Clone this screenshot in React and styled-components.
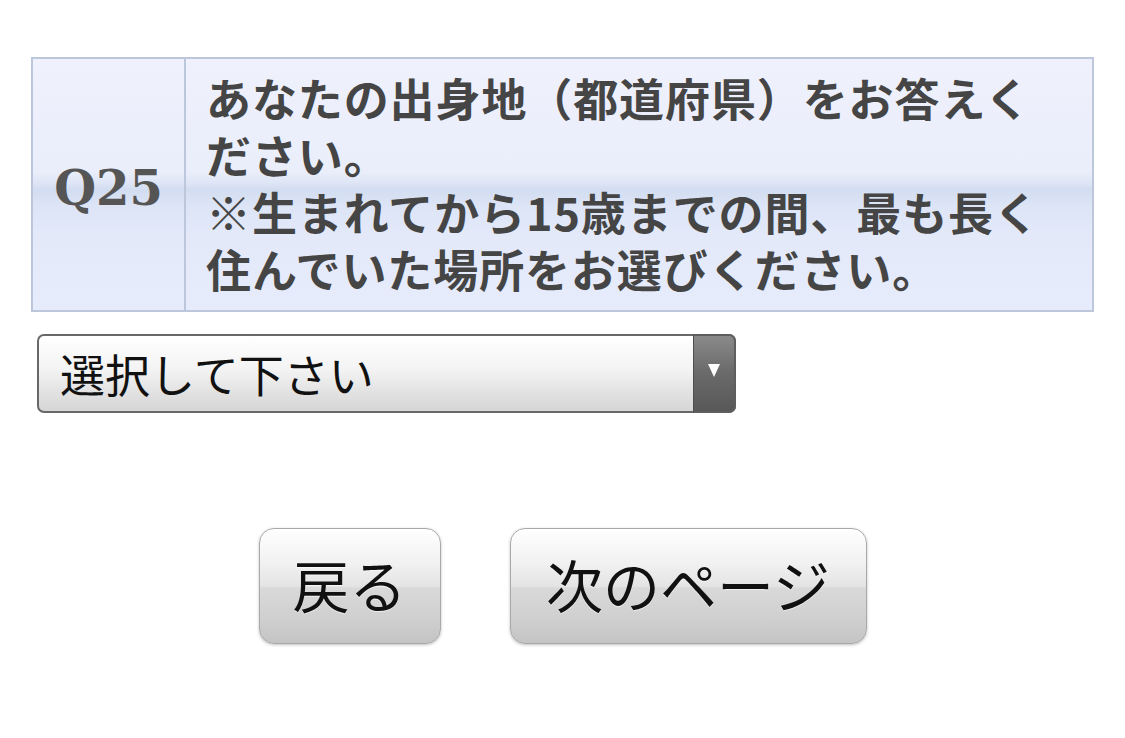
import React from "react";
import styled, { createGlobalStyle } from "styled-components";

const Global = createGlobalStyle`
  html, body { margin: 0; padding: 0; background: #ffffff; }
  body { font-family: "Noto Sans CJK JP", "Noto Sans", sans-serif; }
`;

const Page = styled.div`
  width: 1125px;
  height: 738px;
  box-sizing: border-box;
  padding: 57px 31px 0 31px;
  display: flex;
  flex-direction: column;
`;

const QuestionTable = styled.div`
  display: grid;
  grid-template-columns: 153px 1fr;
  border: 2px solid #bcc7dc;
  background: linear-gradient(
    to bottom,
    #eff1fc 0%,
    #eaeefb 45%,
    #dfe6f6 49%,
    #d3ddf1 52%,
    #dce4f6 58%,
    #e3e9f9 70%,
    #e6ecfb 100%
  );
`;

const NumberCell = styled.div`
  display: flex;
  align-items: center;
  justify-content: center;
  padding-top: 6px;
  border-right: 2px solid #bcc7dc;
  font-family: "DejaVu Serif", "Liberation Serif", serif;
  font-weight: bold;
  font-size: 48px;
  color: #555555;
`;

const QuestionText = styled.div`
  padding: 10px 18px 13px 20px;
  font-family: "Noto Sans CJK JP", sans-serif;
  font-weight: 700;
  font-size: 45px;
  line-height: 57px;
  letter-spacing: 0.9px;
  color: #454545;
  white-space: nowrap;
`;

const SelectWrap = styled.div`
  position: relative;
  margin: 22px 0 0 6px;
  width: 699px;
  height: 79px;
`;

const Select = styled.select`
  appearance: none;
  -webkit-appearance: none;
  width: 100%;
  height: 100%;
  box-sizing: border-box;
  border: 2px solid #686868;
  border-radius: 7px;
  padding: 0 60px 0 21px;
  font-family: "Noto Sans CJK JP", sans-serif;
  font-size: 45px;
  color: #111111;
  background: linear-gradient(to bottom, #ffffff 0%, #f3f3f3 45%, #e2e2e2 75%, #d6d6d6 100%);
  outline: none;
`;

const Arrow = styled.div`
  position: absolute;
  top: 0;
  right: 0;
  width: 43px;
  height: 79px;
  box-sizing: border-box;
  border: 2px solid #5e5e5e;
  border-left: 1px solid #4e4e4e;
  border-radius: 0 7px 7px 0;
  background: linear-gradient(to bottom, #8a8a8a 0%, #6c6c6c 45%, #585858 100%);
  display: flex;
  align-items: center;
  justify-content: center;
  pointer-events: none;
`;

const Triangle = styled.div`
  width: 0;
  height: 0;
  border-left: 6px solid transparent;
  border-right: 6px solid transparent;
  border-top: 13px solid #ffffff;
  margin-bottom: 6px;
`;

const ButtonRow = styled.div`
  display: flex;
  justify-content: center;
  gap: 69px;
  margin-top: 115px;
`;

const NavButton = styled.button`
  height: 116px;
  min-width: ${(p) => p.$w}px;
  box-sizing: border-box;
  padding: 0 30px 6px 30px;
  border: 1.5px solid #a9a9a9;
  border-radius: 15px;
  background: linear-gradient(
    to bottom,
    #ffffff 0%,
    #f1f1f1 30%,
    #e4e4e4 50%,
    #d9d9d9 52%,
    #cfcfcf 80%,
    #c4c4c4 100%
  );
  box-shadow: 0 1px 3px rgba(0, 0, 0, 0.25);
  font-family: "Noto Sans CJK JP", sans-serif;
  font-size: 57px;
  color: #111111;
  display: flex;
  align-items: center;
  justify-content: center;
  text-shadow: 0 1px 0 rgba(255, 255, 255, 0.6);
`;

export default function App() {
  return (
    <>
      <Global />
      <Page>
        <QuestionTable>
          <NumberCell>Q25</NumberCell>
          <QuestionText>
            あなたの出身地（都道府県）をお答えく
            <br />
            ださい。
            <br />
            ※生まれてから15歳までの間、最も長く
            <br />
            住んでいた場所をお選びください。
          </QuestionText>
        </QuestionTable>
        <SelectWrap>
          <Select defaultValue="">
            <option value="">選択して下さい</option>
          </Select>
          <Arrow>
            <Triangle />
          </Arrow>
        </SelectWrap>
        <ButtonRow>
          <NavButton $w={182}>戻る</NavButton>
          <NavButton $w={357}>次のページ</NavButton>
        </ButtonRow>
      </Page>
    </>
  );
}
